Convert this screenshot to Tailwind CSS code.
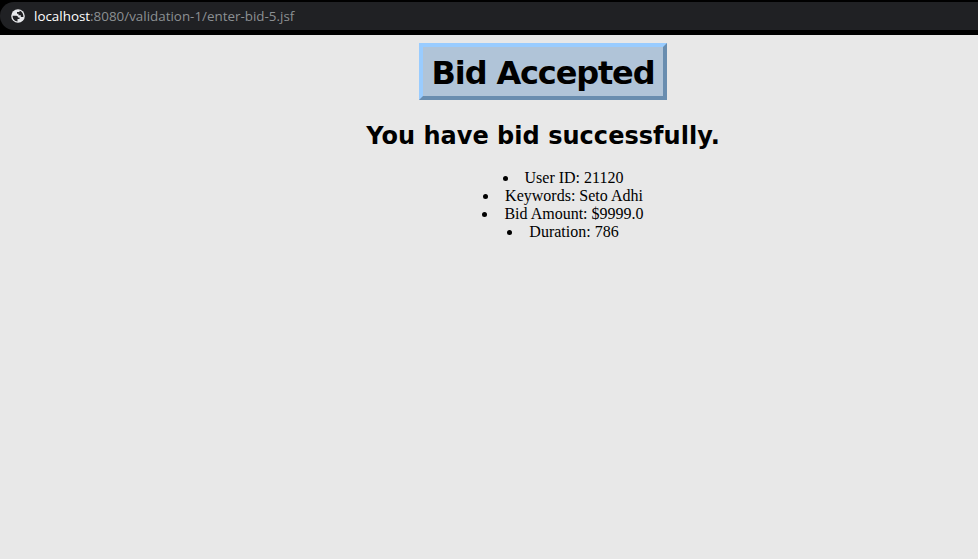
<!DOCTYPE html>
<html lang="en">
<head>
<meta charset="utf-8">
<title>Bid Accepted</title>
<script src="https://cdn.jsdelivr.net/npm/@tailwindcss/browser@4"></script>
</head>
<body class="h-screen overflow-hidden bg-[#e8e8e8] text-black font-['Liberation_Serif',serif]">
<header class="h-[35px] bg-black pt-0.5">
<div class="flex h-7 items-center rounded-l-full bg-[#202124] pl-[11px] font-['Open_Sans',sans-serif] text-[13.4px] text-[#8c9093]">
<svg class="mr-[9px] size-3.5 shrink-0" viewBox="0 0 14 14"><circle cx="7" cy="7" r="6.8" fill="#e8eaed"/><path d="M1.600 6.800H5.500Q7 7 7 8.400H8.500V10H6.500V12.500C3.800 12.300 1.500 10 1.600 6.800ZM8.500 1.700V3H6V4.800H7.500V6.300H9.800V8H12.400C12.700 5 11 2.300 8.500 1.700Z" fill="#202124"/></svg>
<span class="pt-px"><span class="text-white">localhost</span>:8080/validation-1/enter-bid-5.jsf</span>
</div>
</header>
<main class="flex flex-col items-center pt-2 pl-[108px]">
<h1 class="flex h-[57px] w-[248px] items-center justify-center border-4 border-t-[#99ccff] border-l-[#99ccff] border-r-[#698daf] border-b-[#698daf] bg-[#b0c4d8] pt-0.5 font-['DejaVu_Sans',sans-serif] text-[32px] font-bold tracking-[-1.15px] whitespace-nowrap">Bid Accepted</h1>
<h2 class="mt-[21px] font-['DejaVu_Sans',sans-serif] text-2xl leading-[30px] font-bold tracking-[0.03px] whitespace-nowrap">You have bid successfully.</h2>
<ul class="mt-[18px] w-full list-inside list-disc pl-10 text-center text-base leading-[18px]">
<li>User ID: 21120</li><li>Keywords: Seto Adhi</li><li>Bid Amount: $9999.0</li><li>Duration: 786</li>
</ul>
</main>
</body>
</html>
